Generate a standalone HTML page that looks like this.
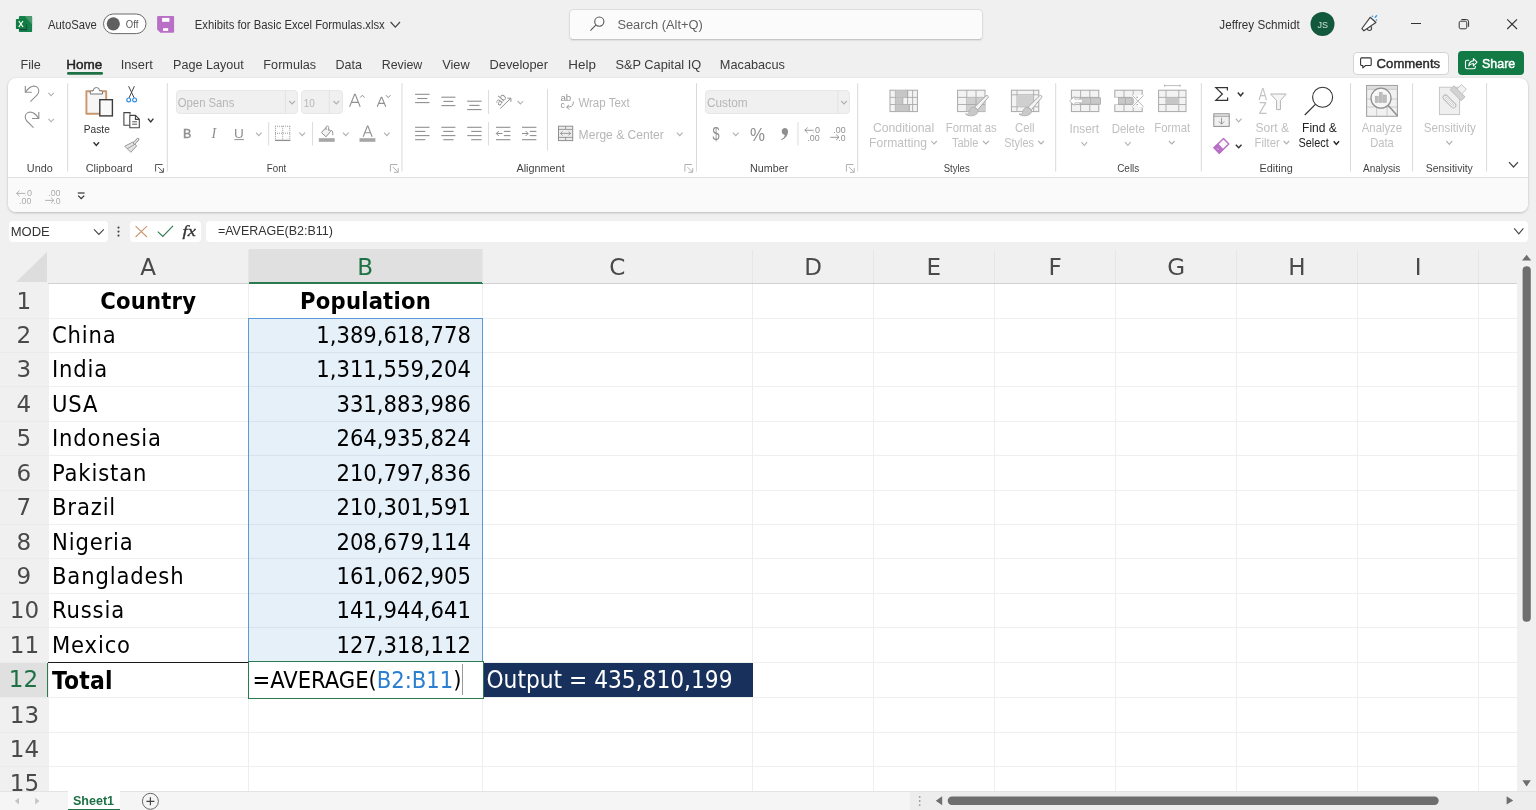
<!DOCTYPE html>
<html lang="en"><head><meta charset="utf-8"><title>Exhibits for Basic Excel Formulas.xlsx - Excel</title>
<style>
*{box-sizing:border-box;margin:0;padding:0}
html,body{width:1536px;height:810px;overflow:hidden;background:#f0f0f0;font-family:"Liberation Sans",sans-serif;color:#242424}
body{position:relative}
.a{position:absolute}
#ov{position:absolute;left:0;top:0;pointer-events:none;will-change:transform}
#ov text{white-space:pre}
#chrome{position:absolute;left:0;top:0;width:1536px;height:810px}
#grid{will-change:transform;position:absolute;left:0;top:0;width:1536px;height:791px;overflow:hidden;font-family:"DejaVu Sans Condensed","DejaVu Sans",sans-serif}
#grid>div{position:absolute}
.sheet{left:48.6px;top:284px;width:1469px;height:507px;background:#fff}
.ch{top:249px;height:35px;line-height:36px;text-align:center;font-size:23.5px;color:#4a4a4a;border-bottom:1px solid #d2d2d2}
.ch span,.rh span{display:inline-block;transform:scaleX(1.09)}
.ch.sel{background:#e0e0e0;color:#1e7145;border-bottom:2px solid #2b7a4f}
.chsep{top:250px;width:1px;height:33px;background:#e6e6e6}
.rh{left:0;width:48px;text-align:center;font-size:23.5px;color:#4a4a4a}
.rh.sel{background:#e0e0e0;color:#1e7145;border-right:1.6px solid #2b7a4f}
.hl{left:48px;width:1469px;height:1px;background:#efefef}
.rhl{left:0;width:48px;height:1px;background:#eaeaea}
.vl{top:284px;width:1px;height:507px;background:#eeeeee}
.range{background:#e6f0f9;border:1px solid #5a9ad8}
.hl2{height:1px;background:#d6e2ee}
.c{font-size:23.5px;color:#000;white-space:nowrap;overflow:visible}
.c.b{font-weight:bold;letter-spacing:.22px}
.c.ctr{text-align:center}
.c.l{text-align:left;padding-left:4px}
.c.ls{letter-spacing:.85px}
.c.r{text-align:right;padding-right:11.6px}
.c.wht{color:#fff}
.a12top{height:1.3px;background:#1a1a1a}
.outc{background:#17315c}
.active{border:1.5px solid #2b7a4f;background:#fff}
.ref{color:#2a7fd0}
.caret{display:inline-block;width:1px;height:31px;background:#9a9a9a;vertical-align:middle;margin-left:0.6px;margin-top:-3px}
.selall{left:15.6px;top:251.8px;width:0;height:0;border-style:solid;border-width:0 0 30.4px 31.4px;border-color:transparent transparent #dddddd transparent}
.c.tot{font-size:24.4px;letter-spacing:.25px}
.c.outt{font-size:24.2px}
</style></head><body>
<div id="grid">
<div class="sheet"></div>
<div class="selall"></div>
<div class="ch" style="left:48px;width:200.5px"><span>A</span></div>
<div class="ch sel" style="left:248.5px;width:234.0px"><span>B</span></div>
<div class="ch" style="left:482.5px;width:270.0px"><span>C</span></div>
<div class="ch" style="left:752.5px;width:121.0px"><span>D</span></div>
<div class="ch" style="left:873.5px;width:121.0px"><span>E</span></div>
<div class="ch" style="left:994.5px;width:121.0px"><span>F</span></div>
<div class="ch" style="left:1115.5px;width:121.0px"><span>G</span></div>
<div class="ch" style="left:1236.5px;width:121.0px"><span>H</span></div>
<div class="ch" style="left:1357.5px;width:121.0px"><span>I</span></div>
<div class="ch" style="left:1478.5px;width:38.5px"><span></span></div>
<div class="chsep" style="left:248.0px"></div>
<div class="chsep" style="left:482.0px"></div>
<div class="chsep" style="left:752.0px"></div>
<div class="chsep" style="left:873.0px"></div>
<div class="chsep" style="left:994.0px"></div>
<div class="chsep" style="left:1115.0px"></div>
<div class="chsep" style="left:1236.0px"></div>
<div class="chsep" style="left:1357.0px"></div>
<div class="chsep" style="left:1478.0px"></div>
<div class="rh" style="top:283.8px;height:34.2px;line-height:34.2px"><span>1</span></div>
<div class="rh" style="top:318.0px;height:34.4px;line-height:34.4px"><span>2</span></div>
<div class="rh" style="top:352.4px;height:34.4px;line-height:34.4px"><span>3</span></div>
<div class="rh" style="top:386.8px;height:34.4px;line-height:34.4px"><span>4</span></div>
<div class="rh" style="top:421.3px;height:34.4px;line-height:34.4px"><span>5</span></div>
<div class="rh" style="top:455.7px;height:34.4px;line-height:34.4px"><span>6</span></div>
<div class="rh" style="top:490.1px;height:34.4px;line-height:34.4px"><span>7</span></div>
<div class="rh" style="top:524.5px;height:34.4px;line-height:34.4px"><span>8</span></div>
<div class="rh" style="top:558.9px;height:34.4px;line-height:34.4px"><span>9</span></div>
<div class="rh" style="top:593.4px;height:34.4px;line-height:34.4px"><span>10</span></div>
<div class="rh" style="top:627.8px;height:34.4px;line-height:34.4px"><span>11</span></div>
<div class="rh sel" style="top:662.2px;height:35.6px;line-height:35.6px"><span>12</span></div>
<div class="rh" style="top:697.8px;height:34.5px;line-height:34.5px"><span>13</span></div>
<div class="rh" style="top:732.3px;height:34.1px;line-height:34.1px"><span>14</span></div>
<div class="rh" style="top:766.4px;height:34.2px;line-height:34.2px"><span>15</span></div>
<div class="hl" style="top:317.5px"></div>
<div class="rhl" style="top:317.5px"></div>
<div class="hl" style="top:351.9px"></div>
<div class="rhl" style="top:351.9px"></div>
<div class="hl" style="top:386.3px"></div>
<div class="rhl" style="top:386.3px"></div>
<div class="hl" style="top:420.8px"></div>
<div class="rhl" style="top:420.8px"></div>
<div class="hl" style="top:455.2px"></div>
<div class="rhl" style="top:455.2px"></div>
<div class="hl" style="top:489.6px"></div>
<div class="rhl" style="top:489.6px"></div>
<div class="hl" style="top:524.0px"></div>
<div class="rhl" style="top:524.0px"></div>
<div class="hl" style="top:558.4px"></div>
<div class="rhl" style="top:558.4px"></div>
<div class="hl" style="top:592.9px"></div>
<div class="rhl" style="top:592.9px"></div>
<div class="hl" style="top:627.3px"></div>
<div class="rhl" style="top:627.3px"></div>
<div class="hl" style="top:661.7px"></div>
<div class="rhl" style="top:661.7px"></div>
<div class="hl" style="top:697.3px"></div>
<div class="rhl" style="top:697.3px"></div>
<div class="hl" style="top:731.8px"></div>
<div class="rhl" style="top:731.8px"></div>
<div class="hl" style="top:765.9px"></div>
<div class="rhl" style="top:765.9px"></div>
<div class="vl" style="left:248.0px"></div>
<div class="vl" style="left:482.0px"></div>
<div class="vl" style="left:752.0px"></div>
<div class="vl" style="left:873.0px"></div>
<div class="vl" style="left:994.0px"></div>
<div class="vl" style="left:1115.0px"></div>
<div class="vl" style="left:1236.0px"></div>
<div class="vl" style="left:1357.0px"></div>
<div class="vl" style="left:1478.0px"></div>
<div class="range" style="left:248.0px;top:317.5px;width:235.0px;height:345.2px"></div>
<div class="hl2" style="top:351.9px;left:249.0px;width:233.0px"></div>
<div class="hl2" style="top:386.3px;left:249.0px;width:233.0px"></div>
<div class="hl2" style="top:420.8px;left:249.0px;width:233.0px"></div>
<div class="hl2" style="top:455.2px;left:249.0px;width:233.0px"></div>
<div class="hl2" style="top:489.6px;left:249.0px;width:233.0px"></div>
<div class="hl2" style="top:524.0px;left:249.0px;width:233.0px"></div>
<div class="hl2" style="top:558.4px;left:249.0px;width:233.0px"></div>
<div class="hl2" style="top:592.9px;left:249.0px;width:233.0px"></div>
<div class="hl2" style="top:627.3px;left:249.0px;width:233.0px"></div>
<div class="c b ctr" style="left:48px;top:283.8px;width:200.5px;height:34.2px;line-height:34.2px">Country</div>
<div class="c b ctr" style="left:248.5px;top:283.8px;width:234.0px;height:34.2px;line-height:34.2px">Population</div>
<div class="c l ls" style="left:48px;top:318.0px;width:200.5px;height:34.4px;line-height:34.4px">China</div>
<div class="c r" style="left:248.5px;top:318.0px;width:234.0px;height:34.4px;line-height:34.4px">1,389,618,778</div>
<div class="c l ls" style="left:48px;top:352.4px;width:200.5px;height:34.4px;line-height:34.4px">India</div>
<div class="c r" style="left:248.5px;top:352.4px;width:234.0px;height:34.4px;line-height:34.4px">1,311,559,204</div>
<div class="c l ls" style="left:48px;top:386.8px;width:200.5px;height:34.4px;line-height:34.4px">USA</div>
<div class="c r" style="left:248.5px;top:386.8px;width:234.0px;height:34.4px;line-height:34.4px">331,883,986</div>
<div class="c l ls" style="left:48px;top:421.3px;width:200.5px;height:34.4px;line-height:34.4px">Indonesia</div>
<div class="c r" style="left:248.5px;top:421.3px;width:234.0px;height:34.4px;line-height:34.4px">264,935,824</div>
<div class="c l ls" style="left:48px;top:455.7px;width:200.5px;height:34.4px;line-height:34.4px">Pakistan</div>
<div class="c r" style="left:248.5px;top:455.7px;width:234.0px;height:34.4px;line-height:34.4px">210,797,836</div>
<div class="c l ls" style="left:48px;top:490.1px;width:200.5px;height:34.4px;line-height:34.4px">Brazil</div>
<div class="c r" style="left:248.5px;top:490.1px;width:234.0px;height:34.4px;line-height:34.4px">210,301,591</div>
<div class="c l ls" style="left:48px;top:524.5px;width:200.5px;height:34.4px;line-height:34.4px">Nigeria</div>
<div class="c r" style="left:248.5px;top:524.5px;width:234.0px;height:34.4px;line-height:34.4px">208,679,114</div>
<div class="c l ls" style="left:48px;top:558.9px;width:200.5px;height:34.4px;line-height:34.4px">Bangladesh</div>
<div class="c r" style="left:248.5px;top:558.9px;width:234.0px;height:34.4px;line-height:34.4px">161,062,905</div>
<div class="c l ls" style="left:48px;top:593.4px;width:200.5px;height:34.4px;line-height:34.4px">Russia</div>
<div class="c r" style="left:248.5px;top:593.4px;width:234.0px;height:34.4px;line-height:34.4px">141,944,641</div>
<div class="c l ls" style="left:48px;top:627.8px;width:200.5px;height:34.4px;line-height:34.4px">Mexico</div>
<div class="c r" style="left:248.5px;top:627.8px;width:234.0px;height:34.4px;line-height:34.4px">127,318,112</div>
<div class="a12top" style="left:48px;top:661.6px;width:200.5px"></div>
<div class="c b l tot" style="left:48px;top:663.4px;width:200.5px;height:35.6px;line-height:35.6px">Total</div>
<div class="outc" style="left:483.0px;top:662.7px;width:269.5px;height:34.6px"></div>
<div class="c l wht outt" style="left:482.5px;top:663.1px;width:270.0px;height:35.6px;line-height:35.6px">Output = 435,810,199</div>
<div class="active" style="left:247.5px;top:661.4px;width:236.0px;height:37.2px"></div>
<div class="c l edit" style="left:248.5px;top:662.7px;width:234.0px;height:35.6px;line-height:35.6px">=AVERAGE(<span class="ref">B2:B11</span>)<span class="caret"></span></div>
</div>
<div id="chrome">
<div class="a" style="left:569px;top:8.5px;width:414.4px;height:31.2px;background:#fbfbfb;border:1px solid #dddddd;border-radius:4.5px;border-bottom-color:#c6c6c6;box-shadow:0 1px 1.5px rgba(0,0,0,.08);"></div>
<div class="a" style="left:1352.7px;top:51.5px;width:96.5px;height:23px;background:#fff;border:1px solid #d4d4d4;border-radius:4px;"></div>
<div class="a" style="left:1457.7px;top:50.8px;width:66.3px;height:24.2px;background:#117a45;border-radius:4px;"></div>
<div class="a" style="left:8px;top:77.6px;width:1520px;height:134.9px;background:#fff;border-radius:8px;box-shadow:0 1px 2.5px rgba(0,0,0,.22),0 0 1px rgba(0,0,0,.12);overflow:hidden"><div class="a" style="left:0;top:99.4px;width:1520px;height:36px;background:#fafafa;border-top:1px solid #dfdfdf"></div></div>
<div class="a" style="left:175.5px;top:90.1px;width:122.8px;height:24px;background:#f0f0f0;border:1px solid #e7e7e7;border-radius:4px;"></div>
<div class="a" style="left:300.5px;top:90.1px;width:42px;height:24px;background:#f0f0f0;border:1px solid #e7e7e7;border-radius:4px;"></div>
<div class="a" style="left:704.8px;top:90.1px;width:145.2px;height:24px;background:#f0f0f0;border:1px solid #e7e7e7;border-radius:4px;"></div>
<div class="a" style="left:8.9px;top:221.4px;width:99.2px;height:20.3px;background:#fff;border-radius:4px;"></div>
<div class="a" style="left:129.6px;top:221.4px;width:71.3px;height:20.3px;background:#fff;border-radius:4px;"></div>
<div class="a" style="left:206.2px;top:221.4px;width:1321.8px;height:20.3px;background:#fff;border-radius:4px;"></div>
<div class="a" style="left:1517px;top:249px;width:19px;height:542px;background:#f0f0f0;"></div>
<div class="a" style="left:0px;top:790.5px;width:1536px;height:19.5px;background:#f5f5f5;border:0;border-top:1px solid #e3e3e3;"></div>
<div class="a" style="left:910px;top:791.5px;width:626px;height:18.5px;background:#ededed;"></div>
<div class="a" style="left:67.7px;top:790.5px;width:52.1px;height:19.5px;background:#fff;border:0;border-bottom:1.6px solid #1e7145;"></div>
</div>
<svg id="ov" width="1536" height="810" viewBox="0 0 1536 810" font-family='"Liberation Sans",sans-serif'>
<rect x="18.9" y="15.9" width="13.2" height="16.2" rx="1.2" fill="#15804a"/>
<path d="M24.6,15.9 H30.9 a1.2,1.2 0 0 1 1.2,1.2 V24.6 Z" fill="#4a9a6e"/>
<path d="M19.4,29.6 H26.6 V24.2" fill="none" stroke="#15303a" stroke-width="0.9"/>
<rect x="15.9" y="18.9" width="10.5" height="10.2" rx="0.9" fill="#107c41"/>
<path d="M18.8,21 L23,27 M23,21 L18.8,27" stroke="#fff" stroke-width="1.25"/>
<text transform="translate(48.00,28.60) scale(0.940,1)" font-size="12" fill="#333">AutoSave</text>
<rect x="103.5" y="14" width="42.5" height="19.6" rx="9.8" fill="#fff" stroke="#6a6a6a" stroke-width="1"/>
<circle cx="113.3" cy="23.8" r="6.6" fill="#606060"/>
<text transform="translate(125.80,28.20) scale(0.829,1)" font-size="11.5" fill="#555">Off</text>
<path d="M158.1,15.9 H173.1 a1,1 0 0 1 1,1 V31.7 a1,1 0 0 1 -1,1 H160.4 L157.1,29.6 V16.9 a1,1 0 0 1 1,-1z" fill="#b96fc6"/>
<rect x="162.1" y="17.9" width="7.3" height="3.9" fill="#fff"/><rect x="163" y="28.2" width="5.2" height="2.7" fill="#fff"/>
<text transform="translate(194.80,28.60) scale(0.941,1)" font-size="12" fill="#333">Exhibits for Basic Excel Formulas.xlsx</text>
<path d="M390.6,22.0 L395.3,27.2 L400.0,22.0" stroke="#444" stroke-width="1.2" fill="none"/>
<circle cx="599.3" cy="21.6" r="4.6" fill="none" stroke="#555" stroke-width="1.1"/><path d="M596,24.9 L590.4,30.6" stroke="#555" stroke-width="1.1"/>
<text transform="translate(617.40,28.70) scale(0.953,1)" font-size="13.5" fill="#616161">Search (Alt+Q)</text>
<text transform="translate(1219.30,28.90) scale(0.936,1)" font-size="12.5" fill="#333">Jeffrey Schmidt</text>
<circle cx="1322.5" cy="24" r="12" fill="#12583c"/>
<text transform="translate(1317.40,27.60) scale(0.949,1)" font-size="9.5" fill="#cfe0d6">JS</text>
<circle cx="1369.4" cy="28.3" r="2.2" fill="none" stroke="#444" stroke-width="1.1"/>
<path d="M1361.9,28.5 L1370.2,17.3 L1375.9,22.5 L1363.9,30.8 Z" fill="#fafafa" stroke="#444" stroke-width="1.2" stroke-linejoin="round"/>
<circle cx="1372.5" cy="16.3" r="0.8" fill="#3a96dd"/><path d="M1375.2,17.2 L1376.6,15.8" stroke="#3a96dd" stroke-width="1.3" stroke-linecap="round"/><circle cx="1376.4" cy="20.1" r="0.8" fill="#3a96dd"/>
<path d="M1411,23.5 H1421" stroke="#333" stroke-width="1"/>
<rect x="1459.2" y="21.2" width="7.6" height="7.6" rx="1.6" fill="none" stroke="#333" stroke-width="1"/>
<path d="M1461.4,19.5 H1466.3 a2.3,2.3 0 0 1 2.3,2.3 V26.8" fill="none" stroke="#333" stroke-width="1"/>
<path d="M1507.2,19.3 L1517,29 M1517,19.3 L1507.2,29" stroke="#333" stroke-width="1.1"/>
<text transform="translate(20.46,68.70) scale(0.939,1)" font-size="13.5" fill="#3b3b3b">File</text>
<text transform="translate(120.65,68.70) scale(0.951,1)" font-size="13.5" fill="#3b3b3b">Insert</text>
<text transform="translate(173.07,68.70) scale(0.933,1)" font-size="13.5" fill="#3b3b3b">Page Layout</text>
<text transform="translate(263.36,68.70) scale(0.939,1)" font-size="13.5" fill="#3b3b3b">Formulas</text>
<text transform="translate(335.57,68.70) scale(0.928,1)" font-size="13.5" fill="#3b3b3b">Data</text>
<text transform="translate(381.68,68.70) scale(0.919,1)" font-size="13.5" fill="#3b3b3b">Review</text>
<text transform="translate(442.20,68.70) scale(0.950,1)" font-size="13.5" fill="#3b3b3b">View</text>
<text transform="translate(489.45,68.70) scale(0.953,1)" font-size="13.5" fill="#3b3b3b">Developer</text>
<text transform="translate(568.31,68.70) scale(0.994,1)" font-size="13.5" fill="#3b3b3b">Help</text>
<text transform="translate(615.50,68.70) scale(0.947,1)" font-size="13.5" fill="#3b3b3b">S&amp;P Capital IQ</text>
<text transform="translate(719.86,68.70) scale(0.943,1)" font-size="13.5" fill="#3b3b3b">Macabacus</text>
<text transform="translate(66.20,68.70) scale(1.003,1)" font-size="13.5" fill="#222" stroke="#222" stroke-width="0.45">Home</text>
<rect x="67" y="72" width="36" height="2.8" rx="1.4" fill="#1e7145"/>
<path d="M1361.6,57.9 h8.6 a1,1 0 0 1 1,1 v5.6 a1,1 0 0 1 -1,1 h-4.6 l-2.8,2.4 v-2.4 h-1.2 a1,1 0 0 1 -1,-1 v-5.6 a1,1 0 0 1 1,-1z" fill="none" stroke="#333" stroke-width="1.1" stroke-linejoin="round"/>
<text transform="translate(1376.60,67.70) scale(0.974,1)" font-size="13.5" fill="#2b2b2b" stroke="#2b2b2b" stroke-width="0.45">Comments</text>
<path d="M1469.2,60.3 h-2.2 a1.5,1.5 0 0 0 -1.5,1.5 v5.4 a1.5,1.5 0 0 0 1.5,1.5 h6.8 a1.5,1.5 0 0 0 1.5,-1.5 v-1.2" fill="none" stroke="#fff" stroke-width="1.1"/>
<path d="M1468.8,65.8 c0.3,-3.2 2,-4.8 4.6,-4.9 v-2.3 l3.6,3.6 -3.6,3.6 v-2.3 c-2,0 -3.4,0.6 -4.6,2.3z" fill="none" stroke="#fff" stroke-width="1.1" stroke-linejoin="round"/>
<text transform="translate(1482.00,67.70) scale(0.924,1)" font-size="13.5" fill="#fff" stroke="#fff" stroke-width="0.45">Share</text>
<path d="M67.7,83.2 V171.5" stroke="#d9d9d9" stroke-width="1"/>
<path d="M167.3,83.2 V171.5" stroke="#d9d9d9" stroke-width="1"/>
<path d="M402,83.2 V171.5" stroke="#d9d9d9" stroke-width="1"/>
<path d="M696.5,83.2 V171.5" stroke="#d9d9d9" stroke-width="1"/>
<path d="M857.7,83.2 V171.5" stroke="#d9d9d9" stroke-width="1"/>
<path d="M1055.7,83.2 V171.5" stroke="#d9d9d9" stroke-width="1"/>
<path d="M1201.3,83.2 V171.5" stroke="#d9d9d9" stroke-width="1"/>
<path d="M1350.5,83.2 V171.5" stroke="#d9d9d9" stroke-width="1"/>
<path d="M1412.6,83.2 V171.5" stroke="#d9d9d9" stroke-width="1"/>
<path d="M1486.6,83.2 V171.5" stroke="#d9d9d9" stroke-width="1"/>
<path d="M25.3,86 V92.2 H31.8 M25.6,91.9 C28,88.4 30.6,86.1 34,86.1 C37,86.1 38.8,88.4 38.8,90.9 C38.8,92.6 38,94 37.2,94.8 L30.4,101.6" fill="none" stroke="#8f8f8f" stroke-width="1.1"/>
<path d="M48.4,92.8 L51.1,95.8 L53.9,92.8" stroke="#b0b0b0" stroke-width="1.1" fill="none"/>
<path d="M38.8,112 V118.5 H32 M38.5,118.2 C36.2,114.6 33.6,112.1 30.2,112.1 C27.2,112.1 25.2,114.4 25.2,117 C25.2,118.8 26,120.2 26.8,121 L33.5,127.7" fill="none" stroke="#8f8f8f" stroke-width="1.1"/>
<path d="M48.4,118.8 L51.1,121.8 L53.9,118.8" stroke="#b0b0b0" stroke-width="1.1" fill="none"/>
<text transform="translate(26.80,171.50) scale(0.945,1)" font-size="11.5" fill="#444">Undo</text>
<path d="M86.4,91.2 H106.2 V113.8 H86.4 Z" fill="#f6f6f6" stroke="#c9976f" stroke-width="1.9" stroke-linejoin="round"/>
<path d="M90.3,94 V91.9 a1,1 0 0 1 1,-1 H93.2 a3.2,3.4 0 0 1 6.4,0 H101.5 a1,1 0 0 1 1,1 V94 Z" fill="#fff" stroke="#777" stroke-width="1"/>
<rect x="99.8" y="99.7" width="12.6" height="16.2" fill="#f9f9f9" stroke="#3c3c3c" stroke-width="1.4"/>
<text transform="translate(83.80,132.60) scale(0.863,1)" font-size="11.8" fill="#333">Paste</text>
<path d="M93.6,142.2 L96.3,145.5 L99.0,142.2" stroke="#333" stroke-width="1.4" fill="none"/>
<path d="M128.6,86.2 L134.2,97.9 M134.4,86.2 L129,97.9" fill="none" stroke="#444" stroke-width="1"/>
<circle cx="128.7" cy="99.9" r="1.9" fill="#fff" stroke="#2f8fe0" stroke-width="1.2"/><circle cx="134.6" cy="99.9" r="1.9" fill="#fff" stroke="#2f8fe0" stroke-width="1.2"/>
<path d="M130,114.4 V112.6 H123.9 V125.2 H129.6" fill="none" stroke="#444" stroke-width="1.1"/>
<path d="M129.8,115.4 H135.6 L139.3,119.2 V127.8 H129.8 Z M135.4,115.6 V119.4 H139.2" fill="#fff" stroke="#444" stroke-width="1.1" stroke-linejoin="round"/>
<path d="M132.2,121.8 H137 M132.2,124.2 H137" stroke="#444" stroke-width="0.9"/>
<path d="M148.0,118.6 L150.7,121.9 L153.4,118.6" stroke="#333" stroke-width="1.4" fill="none"/>
<path d="M124.8,146.2 L133.2,141.9 L136.6,146 L130.8,152.3 Z" fill="#e4e4e4" stroke="#8f8f8f" stroke-width="0.9" stroke-linejoin="round"/>
<path d="M127.2,148.8 L135,144.2" stroke="#8f8f8f" stroke-width="0.8"/>
<path d="M134.4,143 L138,139.2" stroke="#8f8f8f" stroke-width="2.8" stroke-linecap="round"/><path d="M134.4,143 L138,139.2" stroke="#efefef" stroke-width="1.2" stroke-linecap="round"/>
<text transform="translate(85.70,171.50) scale(0.952,1)" font-size="11.5" fill="#444">Clipboard</text>
<path d="M155.6,171.5 V164.5 H162.6" fill="none" stroke="#555" stroke-width="1"/><path d="M158.2,167.1 L163.2,172.1 M163.4,168.1 V172.3 H159.2" fill="none" stroke="#555" stroke-width="1"/>
<path d="M285.4,91 V113.2" stroke="#e2e2e2" stroke-width="1"/>
<text transform="translate(177.80,106.80) scale(0.904,1)" font-size="12.5" fill="#b6b6b6">Open Sans</text>
<path d="M289.3,101.0 L292.1,104.0 L295.0,101.0" stroke="#b0b0b0" stroke-width="1.1" fill="none"/>
<path d="M329.3,91 V113.2" stroke="#e2e2e2" stroke-width="1"/>
<text transform="translate(303.70,106.80) scale(0.892,1)" font-size="11.2" fill="#b6b6b6">10</text>
<path d="M333.5,101.0 L336.3,104.0 L339.1,101.0" stroke="#b0b0b0" stroke-width="1.1" fill="none"/>
<path d="M349.6,106.8 L354.6,94.4 H355.2 L360.2,106.8 M351.4,102.4 H358.4" fill="none" stroke="#8f8f8f" stroke-width="1.1"/>
<path d="M360.2,97.6 L362.4,95.2 L364.6,97.6" stroke="#8f8f8f" stroke-width="1" fill="none"/>
<path d="M377.2,106.8 L381.2,97.3 H381.8 L385.8,106.8 M378.7,103.4 H384.3" fill="none" stroke="#8f8f8f" stroke-width="1.1"/>
<path d="M386.0,95.2 L388.2,97.6 L390.4,95.2" stroke="#8f8f8f" stroke-width="1" fill="none"/>
<text transform="translate(183.05,137.50) scale(0.950,1)" font-size="13.2" fill="#8f8f8f" stroke="#8f8f8f" stroke-width="0.45">B</text>
<text transform="translate(211.43,137.50) scale(0.929,1)" font-size="15.2" fill="#8f8f8f" font-style="italic" font-family='"Liberation Serif",sans-serif'>I</text>
<text transform="translate(233.99,137.50) scale(1.012,1)" font-size="13.4" fill="#8f8f8f">U</text>
<path d="M234.4,139.6 H243.8" stroke="#8f8f8f" stroke-width="1"/>
<path d="M256.0,132.6 L258.8,135.7 L261.5,132.6" stroke="#b0b0b0" stroke-width="1.1" fill="none"/>
<path d="M268.7,122 V145.6" stroke="#dcdcdc" stroke-width="1"/>
<path d="M275,126.2 H290.4 M275,133.2 H290.4 M275.5,126.2 V139.6 M282.7,126.2 V139.6 M289.8,126.2 V139.6" fill="none" stroke="#9a9a9a" stroke-width="1" stroke-dasharray="1 1"/>
<path d="M275,140.4 H290.4" stroke="#8f8f8f" stroke-width="1.3"/>
<path d="M299.4,132.6 L302.2,135.7 L305.0,132.6" stroke="#b0b0b0" stroke-width="1.1" fill="none"/>
<path d="M312.5,122 V145.6" stroke="#dcdcdc" stroke-width="1"/>
<path d="M326.2,127.4 L321.4,132.6 L326,136.8 L330.7,131.2 L328.6,129.2" fill="#f2f2f2" stroke="#8f8f8f" stroke-width="1" stroke-linejoin="round"/>
<path d="M326,130 V127.4 a1.35,1.35 0 0 1 2.7,0 V130.8" fill="none" stroke="#8f8f8f" stroke-width="0.9"/>
<path d="M330.4,130.8 C332,129.6 333,131.6 332.8,135.2" fill="none" stroke="#8f8f8f" stroke-width="1"/>
<rect x="318.8" y="138.2" width="15.9" height="3.6" fill="#a6a6a6"/>
<path d="M343.0,132.6 L345.8,135.7 L348.6,132.6" stroke="#b0b0b0" stroke-width="1.1" fill="none"/>
<path d="M363.2,136.8 L367.4,126 H367.9 L372.1,136.8 M364.8,132.8 H370.5" fill="none" stroke="#8f8f8f" stroke-width="1.1"/>
<rect x="359.5" y="138.2" width="15.9" height="3.6" fill="#a6a6a6"/>
<path d="M384.1,132.6 L386.9,135.7 L389.6,132.6" stroke="#b0b0b0" stroke-width="1.1" fill="none"/>
<text transform="translate(266.80,171.50) scale(0.848,1)" font-size="11.5" fill="#444">Font</text>
<path d="M390.4,171.5 V164.5 H397.4" fill="none" stroke="#b0b0b0" stroke-width="1"/><path d="M393.0,167.1 L398.0,172.1 M398.2,168.1 V172.3 H394.0" fill="none" stroke="#b0b0b0" stroke-width="1"/>
<path d="M415.1,94.3 H429.5" stroke="#8f8f8f" stroke-width="1.1"/>
<path d="M417.20000000000005,98.5 H427.4" stroke="#8f8f8f" stroke-width="1.1"/>
<path d="M415.1,102.6 H429.5" stroke="#8f8f8f" stroke-width="1.1"/>
<path d="M441.3,97.2 H455.4" stroke="#8f8f8f" stroke-width="1.1"/>
<path d="M443.40000000000003,101.4 H453.29999999999995" stroke="#8f8f8f" stroke-width="1.1"/>
<path d="M441.3,105.6 H455.4" stroke="#8f8f8f" stroke-width="1.1"/>
<path d="M467.2,101.2 H481.6" stroke="#8f8f8f" stroke-width="1.1"/>
<path d="M469.3,105.4 H479.5" stroke="#8f8f8f" stroke-width="1.1"/>
<path d="M467.2,109.6 H481.6" stroke="#8f8f8f" stroke-width="1.1"/>
<path d="M488.5,90.1 V114" stroke="#dcdcdc" stroke-width="1"/>
<text transform="translate(500.7,99.6) rotate(-50)" x="0" y="3.4" text-anchor="middle" font-size="10.5" fill="#8f8f8f">ab</text>
<path d="M500.2,108.6 L510.8,98.3 M507.3,98.2 H510.9 V101.8" fill="none" stroke="#8f8f8f" stroke-width="1"/>
<path d="M517.6,101.0 L520.4,104.0 L523.1,101.0" stroke="#b0b0b0" stroke-width="1.1" fill="none"/>
<path d="M415.1,127.3 H429.5" stroke="#8f8f8f" stroke-width="1.1"/>
<path d="M415.1,131.4 H425.3" stroke="#8f8f8f" stroke-width="1.1"/>
<path d="M415.1,135.6 H429.5" stroke="#8f8f8f" stroke-width="1.1"/>
<path d="M415.1,139.7 H425.3" stroke="#8f8f8f" stroke-width="1.1"/>
<path d="M441.3,127.3 H455.4" stroke="#8f8f8f" stroke-width="1.1"/>
<path d="M443.2,131.4 H453.6" stroke="#8f8f8f" stroke-width="1.1"/>
<path d="M441.3,135.6 H455.4" stroke="#8f8f8f" stroke-width="1.1"/>
<path d="M443.2,139.7 H453.6" stroke="#8f8f8f" stroke-width="1.1"/>
<path d="M467.2,127.3 H481.6" stroke="#8f8f8f" stroke-width="1.1"/>
<path d="M471.2,131.4 H481.6" stroke="#8f8f8f" stroke-width="1.1"/>
<path d="M467.2,135.6 H481.6" stroke="#8f8f8f" stroke-width="1.1"/>
<path d="M471.2,139.7 H481.6" stroke="#8f8f8f" stroke-width="1.1"/>
<path d="M488.5,122 V145.6" stroke="#dcdcdc" stroke-width="1"/>
<path d="M496,127.3 H510.4" stroke="#8f8f8f" stroke-width="1.1"/>
<path d="M503.8,131.4 H510.4" stroke="#8f8f8f" stroke-width="1.1"/>
<path d="M503.8,135.6 H510.4" stroke="#8f8f8f" stroke-width="1.1"/>
<path d="M496,139.7 H510.4" stroke="#8f8f8f" stroke-width="1.1"/>
<path d="M496.4,133.5 H502.4 M498.8,131 L496.3,133.5 L498.8,136" fill="none" stroke="#8f8f8f" stroke-width="1"/>
<path d="M522,127.3 H536.4" stroke="#8f8f8f" stroke-width="1.1"/>
<path d="M529.8,131.4 H536.4" stroke="#8f8f8f" stroke-width="1.1"/>
<path d="M529.8,135.6 H536.4" stroke="#8f8f8f" stroke-width="1.1"/>
<path d="M522,139.7 H536.4" stroke="#8f8f8f" stroke-width="1.1"/>
<path d="M522,133.5 H528 M525.6,131 L528.1,133.5 L525.6,136" fill="none" stroke="#8f8f8f" stroke-width="1"/>
<path d="M547.5,89 V150.6" stroke="#dcdcdc" stroke-width="1"/>
<text transform="translate(560.40,101.20) scale(1.004,1)" font-size="9.8" fill="#8f8f8f">ab</text>
<text transform="translate(560.40,108.20) scale(0.880,1)" font-size="9.8" fill="#8f8f8f">c</text>
<path d="M573.3,101.6 C573.6,104.6 572.2,106.6 569.6,106.9 H566.8 M569,104.8 L566.6,107 L569.2,109.6" fill="none" stroke="#8f8f8f" stroke-width="0.9"/>
<text transform="translate(578.40,106.70) scale(0.958,1)" font-size="12" fill="#b6b6b6">Wrap Text</text>
<rect x="558.5" y="126.2" width="14.2" height="14.4" fill="#ededed" stroke="#8f8f8f" stroke-width="1"/>
<path d="M558.5,129.4 H572.7 M558.5,137.4 H572.7 M565.6,126.2 V129.4 M565.6,137.4 V140.6" stroke="#8f8f8f" stroke-width="0.9"/>
<path d="M560.6,133.4 H570.6 M562.6,131.4 L560.5,133.4 L562.6,135.4 M568.6,131.4 L570.7,133.4 L568.6,135.4" fill="none" stroke="#8f8f8f" stroke-width="0.9"/>
<text transform="translate(578.60,138.80) scale(1.008,1)" font-size="12" fill="#b6b6b6">Merge &amp; Center</text>
<path d="M676.9,132.6 L679.8,135.7 L682.6,132.6" stroke="#b0b0b0" stroke-width="1.1" fill="none"/>
<text transform="translate(516.50,171.50) scale(0.943,1)" font-size="11.5" fill="#444">Alignment</text>
<path d="M684.9,171.5 V164.5 H691.9" fill="none" stroke="#b0b0b0" stroke-width="1"/><path d="M687.5,167.1 L692.5,172.1 M692.6999999999999,168.1 V172.3 H688.5" fill="none" stroke="#b0b0b0" stroke-width="1"/>
<path d="M837.9,91 V113.2" stroke="#e2e2e2" stroke-width="1"/>
<text transform="translate(707.00,106.80) scale(0.945,1)" font-size="12.5" fill="#b6b6b6">Custom</text>
<path d="M841.2,101.0 L844.0,104.0 L846.8,101.0" stroke="#b0b0b0" stroke-width="1.1" fill="none"/>
<text transform="translate(712.50,139.90) scale(0.730,1)" font-size="17.5" fill="#8f8f8f">$</text>
<path d="M732.9,132.6 L735.8,135.7 L738.7,132.6" stroke="#b0b0b0" stroke-width="1.1" fill="none"/>
<text transform="translate(750.00,140.90) scale(0.888,1)" font-size="19" fill="#8f8f8f">%</text>
<path d="M784.5,128 a3.5,3.5 0 0 1 3.5,3.6 c0,4 -2.6,7 -6.6,8.6 l-0.4,-0.9 c2.4,-1.2 3.6,-2.6 3.8,-4.4 a3.5,3.5 0 0 1 -0.3,-6.9z" fill="#8f8f8f"/>
<path d="M798,122 V145.6" stroke="#dcdcdc" stroke-width="1"/>
<path d="M804.8,130.3 H813.5 M807.7,127.5 L804.8,130.3 L807.7,133.1" fill="none" stroke="#8f8f8f" stroke-width="0.9"/>
<text transform="translate(815.10,132.70) scale(0.940,1)" font-size="9.6" fill="#8f8f8f">0</text>
<circle cx="813.7" cy="132.3" r="0.45" fill="#8f8f8f"/>
<text transform="translate(807.30,140.90) scale(0.923,1)" font-size="9.6" fill="#8f8f8f">.00</text>
<text transform="translate(833.30,132.70) scale(0.923,1)" font-size="9.6" fill="#8f8f8f">.00</text>
<path d="M830.2,137.3 H839.0 M836.1,134.5 L839.0,137.3 L836.1,140.1" fill="none" stroke="#8f8f8f" stroke-width="0.9"/>
<text transform="translate(838.40,140.90) scale(0.900,1)" font-size="9.6" fill="#8f8f8f">.0</text>
<text transform="translate(750.00,171.50) scale(0.935,1)" font-size="11.5" fill="#444">Number</text>
<path d="M846.4,171.5 V164.5 H853.4" fill="none" stroke="#b0b0b0" stroke-width="1"/><path d="M849.0,167.1 L854.0,172.1 M854.1999999999999,168.1 V172.3 H850.0" fill="none" stroke="#b0b0b0" stroke-width="1"/>
<rect x="890" y="90.2" width="27.4" height="21.4" fill="#f3f3f3" stroke="#a9a9a9" stroke-width="1"/>
<path d="M895.4,90.2 V111.6 M907.6,90.2 V111.6 M912.6,90.2 V111.6 M890,97.4 H917.4 M890,104.5 H917.4 " stroke="#a9a9a9" stroke-width="0.9" fill="none"/>
<rect x="895.6" y="90.6" width="11.8" height="6.6" fill="#c6c6c6"/><rect x="895.6" y="97.8" width="7" height="6.4" fill="#c6c6c6"/><rect x="895.6" y="104.8" width="13.6" height="6.4" fill="#c6c6c6"/>
<path d="M902.8,97.4 V104.5 M909.4,104.5 V111.6 M907.6,90.2 V97.4" stroke="#a9a9a9" stroke-width="0.9"/>
<text transform="translate(872.90,131.60) scale(1.021,1)" font-size="12" fill="#c0c0c0">Conditional</text>
<text transform="translate(869.10,147.30) scale(1.009,1)" font-size="12" fill="#c0c0c0">Formatting</text>
<path d="M931.3,141.0 L934.0,144.0 L936.8,141.0" stroke="#b0b0b0" stroke-width="1.1" fill="none"/>
<rect x="957.6" y="90.2" width="27.4" height="21.4" fill="#f3f3f3" stroke="#a9a9a9" stroke-width="1"/>
<path d="M966.8000000000001,90.2 V111.6 M976.0,90.2 V111.6 M957.6,97.4 H985.0 M957.6,104.5 H985.0 " stroke="#a9a9a9" stroke-width="0.9" fill="none"/>
<rect x="967" y="97.6" width="17.8" height="13.8" fill="#cfcfcf"/>
<path d="M976,97.4 V111.6 M966.8,104.5 H985" stroke="#a9a9a9" stroke-width="0.9"/>
<path d="M986.0,95.80000000000001 C987.6,94.80000000000001 988.8,96.2 988.0,97.60000000000001 L977.8,109.80000000000001 L974.4,107.2 Z" fill="#f4f4f4" stroke="#a9a9a9" stroke-width="1" stroke-linejoin="round"/>
<path d="M974.6,107.4 C971.0,106.80000000000001 969.1999999999999,110.0 969.0,112.4 C968.6,114.0 966.8,114.60000000000001 965.4,113.80000000000001 C967.4,116.4 974.0,116.60000000000001 976.8,113.80000000000001 C978.1999999999999,112.2 978.1999999999999,110.80000000000001 977.6,109.80000000000001 Z" fill="#c9c9c9" stroke="#a9a9a9" stroke-width="0.8"/>
<text transform="translate(945.70,131.60) scale(0.946,1)" font-size="12" fill="#c0c0c0">Format as</text>
<text transform="translate(951.90,147.30) scale(0.924,1)" font-size="12" fill="#c0c0c0">Table</text>
<path d="M983.0,141.0 L985.9,144.0 L988.8,141.0" stroke="#b0b0b0" stroke-width="1.1" fill="none"/>
<rect x="1011.4" y="90.2" width="27.4" height="21.4" fill="#f3f3f3" stroke="#a9a9a9" stroke-width="1"/>
<path d="M1017.0,90.2 V111.6 M1033.6,90.2 V111.6 M1011.4,94.8 H1038.8 M1011.4,106.80000000000001 H1038.8 " stroke="#a9a9a9" stroke-width="0.9" fill="none"/>
<rect x="1017.4" y="95.2" width="15.8" height="11.2" fill="#cfcfcf"/>
<path d="M1039.6,95.80000000000001 C1041.2,94.80000000000001 1042.4,96.2 1041.6,97.60000000000001 L1031.4,109.80000000000001 L1028,107.2 Z" fill="#f4f4f4" stroke="#a9a9a9" stroke-width="1" stroke-linejoin="round"/>
<path d="M1028.2,107.4 C1024.6,106.80000000000001 1022.8,110.0 1022.6,112.4 C1022.2,114.0 1020.4,114.60000000000001 1019,113.80000000000001 C1021,116.4 1027.6,116.60000000000001 1030.4,113.80000000000001 C1031.8,112.2 1031.8,110.80000000000001 1031.2,109.80000000000001 Z" fill="#c9c9c9" stroke="#a9a9a9" stroke-width="0.8"/>
<text transform="translate(1015.00,131.60) scale(0.950,1)" font-size="12" fill="#c0c0c0">Cell</text>
<text transform="translate(1004.20,147.30) scale(0.912,1)" font-size="12" fill="#c0c0c0">Styles</text>
<path d="M1038.2,141.0 L1041.1,144.0 L1043.9,141.0" stroke="#b0b0b0" stroke-width="1.1" fill="none"/>
<text transform="translate(943.70,171.50) scale(0.830,1)" font-size="11.5" fill="#444">Styles</text>
<rect x="1071.4" y="90.2" width="27.4" height="21.4" fill="#f3f3f3" stroke="#a9a9a9" stroke-width="1"/>
<path d="M1080.6000000000001,90.2 V111.6 M1089.8000000000002,90.2 V111.6 M1071.4,97.4 H1098.8000000000002 M1071.4,104.5 H1098.8000000000002 " stroke="#a9a9a9" stroke-width="0.9" fill="none"/>
<rect x="1080" y="97.8" width="20.6" height="6.4" fill="#c9c9c9" stroke="#a9a9a9" stroke-width="0.8"/><path d="M1090.6,97.8 V104.2" stroke="#a9a9a9" stroke-width="0.8"/>
<path d="M1069.6,101 L1074.8,96.4 V99.2 H1082.6 V102.8 H1074.8 V105.6 Z" fill="#fff" stroke="#bdbdbd" stroke-width="0.9" stroke-linejoin="round"/>
<text transform="translate(1069.42,132.50) scale(0.984,1)" font-size="12" fill="#c0c0c0">Insert</text>
<path d="M1081.6,142.2 L1084.3,145.5 L1087.1,142.2" stroke="#b0b0b0" stroke-width="1.1" fill="none"/>
<rect x="1114.8" y="90.2" width="27.4" height="21.4" fill="#f3f3f3" stroke="#a9a9a9" stroke-width="1"/>
<path d="M1124.0,90.2 V111.6 M1133.2,90.2 V111.6 M1114.8,97.4 H1142.2 M1114.8,104.5 H1142.2 " stroke="#a9a9a9" stroke-width="0.9" fill="none"/>
<rect x="1113.4" y="97.6" width="4.8" height="6.8" fill="#fff"/><rect x="1138" y="95" width="6" height="12" fill="#fff"/>
<rect x="1118.6" y="97.8" width="13.6" height="6.4" fill="#c9c9c9" stroke="#a9a9a9" stroke-width="0.8"/><path d="M1125.4,97.8 V104.2" stroke="#a9a9a9" stroke-width="0.8"/>
<path d="M1132.4,95.4 L1143.6,106.8 M1143.6,95.4 L1132.4,106.8" stroke="#fff" stroke-width="2.6"/><path d="M1132.4,95.4 L1143.6,106.8 M1143.6,95.4 L1132.4,106.8" stroke="#b9b9b9" stroke-width="1"/>
<text transform="translate(1111.70,132.50) scale(0.954,1)" font-size="12" fill="#c0c0c0">Delete</text>
<path d="M1125.1,142.2 L1127.8,145.5 L1130.6,142.2" stroke="#b0b0b0" stroke-width="1.1" fill="none"/>
<rect x="1158.6" y="90.2" width="27.4" height="21.4" fill="#f3f3f3" stroke="#a9a9a9" stroke-width="1"/>
<path d="M1166.0,90.2 V111.6 M1178.8,90.2 V111.6 M1158.6,97.4 H1186.0 M1158.6,104.5 H1186.0 " stroke="#a9a9a9" stroke-width="0.9" fill="none"/>
<rect x="1166" y="97.8" width="12.8" height="6.4" fill="#c6c6c6"/>
<path d="M1164.6,85.6 H1180.2 M1164.6,84.4 V86.8 M1180.2,84.4 V86.8" stroke="#b4b4b4" stroke-width="0.9"/>
<text transform="translate(1154.30,131.60) scale(0.946,1)" font-size="12" fill="#c0c0c0">Format</text>
<path d="M1168.9,141.0 L1171.8,144.0 L1174.6,141.0" stroke="#b0b0b0" stroke-width="1.1" fill="none"/>
<text transform="translate(1117.20,171.50) scale(0.864,1)" font-size="11.5" fill="#444">Cells</text>
<path d="M1227.4,90.4 V87.6 H1215.8 L1222.4,94 L1215.8,100.4 H1227.6 V97.6" fill="none" stroke="#333" stroke-width="1.2" stroke-linejoin="miter"/>
<path d="M1237.8,92.5 L1240.6,95.8 L1243.4,92.5" stroke="#333" stroke-width="1.4" fill="none"/>
<rect x="1213.8" y="113.8" width="15.4" height="12.6" fill="#f0f0f0" stroke="#8f8f8f" stroke-width="1"/><path d="M1213.8,116.2 H1229.2" stroke="#8f8f8f" stroke-width="0.9"/>
<path d="M1221.5,117.8 V124 M1218.8,121.4 L1221.5,124.2 L1224.2,121.4" fill="none" stroke="#8f8f8f" stroke-width="0.9"/>
<path d="M1235.8,118.6 L1238.7,121.9 L1241.5,118.6" stroke="#b0b0b0" stroke-width="1.1" fill="none"/>
<path d="M1223.5,138.4 L1228.8,143.9 L1219.3,153.2 L1214,147.7 Z" fill="#f8f8f8" stroke="#b86fc8" stroke-width="1.4" stroke-linejoin="round"/>
<path d="M1217.9,144.2 L1222.9,149.4 L1219.3,153.2 L1214,147.7 Z" fill="#b86fc8" stroke="#b86fc8" stroke-width="1.2" stroke-linejoin="round"/>
<path d="M1217.2,148.4 L1218.6,149.8" stroke="#ead3ee" stroke-width="0.8"/>
<path d="M1235.8,144.7 L1238.7,147.8 L1241.5,144.7" stroke="#333" stroke-width="1.4" fill="none"/>
<text transform="translate(1258.50,99.60) scale(0.827,1)" font-size="15.6" fill="#c4c4c4">A</text>
<text transform="translate(1258.80,113.70) scale(0.860,1)" font-size="15.6" fill="#c4c4c4">Z</text>
<path d="M1270.6,94 H1286.2 L1280.4,100.6 V109.6 H1276.6 V100.6 Z" fill="#f6f6f6" stroke="#b4b4b4" stroke-width="1" stroke-linejoin="round"/>
<text transform="translate(1255.50,131.60) scale(1.011,1)" font-size="12" fill="#c0c0c0">Sort &amp;</text>
<text transform="translate(1254.60,147.30) scale(0.945,1)" font-size="12" fill="#c0c0c0">Filter</text>
<path d="M1283.6,141.0 L1286.4,144.0 L1289.2,141.0" stroke="#b0b0b0" stroke-width="1.1" fill="none"/>
<circle cx="1322.6" cy="97.2" r="10" fill="none" stroke="#333" stroke-width="1.1"/><path d="M1315.4,104.4 L1304.8,115" stroke="#333" stroke-width="1.2"/>
<text transform="translate(1302.10,131.60) scale(1.001,1)" font-size="12" fill="#222">Find &amp;</text>
<text transform="translate(1298.40,147.30) scale(0.911,1)" font-size="12" fill="#222">Select</text>
<path d="M1333.7,141.2 L1336.3,144.4 L1339.0,141.2" stroke="#222" stroke-width="1.4" fill="none"/>
<text transform="translate(1259.50,171.50) scale(0.949,1)" font-size="11.5" fill="#444">Editing</text>
<rect x="1366.6" y="85.5" width="30.8" height="30.8" fill="#f1f1f1" stroke="#a4a4a4" stroke-width="1.1"/><rect x="1367.2" y="86" width="29.6" height="3" fill="#dedede"/>
<path d="M1367,89.4 H1397 M1367,99 H1397 M1367,107 H1397 M1376.6,107 V116 M1387.1,107 V116" stroke="#c6c6c6" stroke-width="0.9" fill="none"/>
<circle cx="1381" cy="98.2" r="10" fill="#f7f7f7" stroke="#8f8f8f" stroke-width="1.3"/>
<rect x="1375.2" y="96.2" width="3" height="6.4" fill="#bdbdbd" stroke="#a8a8a8" stroke-width="0.5"/><rect x="1379.2" y="92.4" width="3" height="10.2" fill="#bdbdbd" stroke="#a8a8a8" stroke-width="0.5"/><rect x="1383.1" y="95" width="3.3" height="7.6" fill="#bdbdbd" stroke="#a8a8a8" stroke-width="0.5"/>
<path d="M1388.2,105.4 L1397.4,115.8" stroke="#8f8f8f" stroke-width="1.5"/>
<text transform="translate(1361.80,131.50) scale(0.944,1)" font-size="12" fill="#c0c0c0">Analyze</text>
<text transform="translate(1370.20,147.30) scale(0.931,1)" font-size="12" fill="#c0c0c0">Data</text>
<text transform="translate(1363.00,171.50) scale(0.871,1)" font-size="11.5" fill="#444">Analysis</text>
<rect x="1439.4" y="87.2" width="20.2" height="27.4" fill="#efefef" stroke="#c2c2c2" stroke-width="0.9"/>
<g transform="translate(1457.6,93.3) rotate(-45)"><rect x="-9.4" y="-5" width="7" height="10" fill="#efefef"/><rect x="-13.9" y="-8" width="4.8" height="16" rx="2.2" fill="#f6f6f6" stroke="#b8b8b8" stroke-width="1"/><rect x="-12.3" y="-6" width="1.6" height="12" rx="0.8" fill="none" stroke="#c2c2c2" stroke-width="0.7"/><rect x="-2.75" y="-7.8" width="5.5" height="15.6" fill="#d2d2d2" stroke="#bcbcbc" stroke-width="0.9"/><rect x="2.75" y="-3.4" width="6.2" height="6.8" fill="#f2f2f2" stroke="#c2c2c2" stroke-width="0.9"/></g>
<text transform="translate(1423.80,131.50) scale(0.965,1)" font-size="12" fill="#c0c0c0">Sensitivity</text>
<path d="M1446.3,140.8 L1449.3,144.4 L1452.3,140.8" stroke="#b0b0b0" stroke-width="1.1" fill="none"/>
<text transform="translate(1425.70,171.50) scale(0.911,1)" font-size="11.5" fill="#444">Sensitivity</text>
<path d="M1509.0,162.2 L1513.5,167.0 L1518.0,162.2" stroke="#444" stroke-width="1.2" fill="none"/>
<path d="M16.6,193.4 H25.3 M19.5,190.6 L16.6,193.4 L19.5,196.2" fill="none" stroke="#ababab" stroke-width="0.9"/>
<text transform="translate(26.90,195.80) scale(0.940,1)" font-size="9.6" fill="#ababab">0</text>
<circle cx="25.5" cy="195.4" r="0.45" fill="#ababab"/>
<text transform="translate(19.10,204.00) scale(0.923,1)" font-size="9.6" fill="#ababab">.00</text>
<text transform="translate(48.20,195.80) scale(0.923,1)" font-size="9.6" fill="#ababab">.00</text>
<path d="M45.1,200.4 H53.9 M51.0,197.6 L53.9,200.4 L51.0,203.2" fill="none" stroke="#ababab" stroke-width="0.9"/>
<text transform="translate(53.30,204.00) scale(0.900,1)" font-size="9.6" fill="#ababab">.0</text>
<path d="M77.8,193 H84.6" stroke="#333" stroke-width="1.2"/>
<path d="M78.2,195.6 L81.2,198.6 L84.2,195.6" stroke="#333" stroke-width="1.3" fill="none"/>
<text transform="translate(10.65,235.80) scale(1.045,1)" font-size="12.5" fill="#333">MODE</text>
<path d="M94.0,229.3 L98.9,234.4 L103.8,229.3" stroke="#444" stroke-width="1.1" fill="none"/>
<circle cx="118.5" cy="227.6" r="1.05" fill="#444"/><circle cx="118.5" cy="231.6" r="1.05" fill="#444"/><circle cx="118.5" cy="235.6" r="1.05" fill="#444"/>
<path d="M135.6,226.2 L147,237 M147,226.2 L135.6,237" stroke="#c9976f" stroke-width="1.1"/>
<path d="M157.8,231.6 L162.8,236.4 L173,225.8" fill="none" stroke="#2b7a4f" stroke-width="1.1"/>
<text transform="translate(182.60,236.40) scale(1.185,1)" font-size="15.5" fill="#333" font-style="italic" font-family='"Liberation Serif",sans-serif' stroke="#333" stroke-width="0.35">fx</text>
<text transform="translate(217.90,235.40) scale(0.999,1)" font-size="12.5" fill="#333">=AVERAGE(B2:B11)</text>
<path d="M1514.2,228.4 L1518.8,233.8 L1523.4,228.4" stroke="#444" stroke-width="1.1" fill="none"/>
<path d="M1522,260.4 L1526.6,254.8 L1531.2,260.4 Z" fill="#6e6e6e"/>
<rect x="1522.6" y="266.2" width="8.2" height="355.6" rx="4.1" fill="#6e6e6e"/>
<path d="M1522.4,780.2 L1526.6,786.6 L1530.8,780.2 Z" fill="#6e6e6e"/>
<path d="M19,797.8 V804.4 L14.8,801.1 Z" fill="#c4c4c4"/><path d="M35.2,797.8 V804.4 L39.4,801.1 Z" fill="#c4c4c4"/>
<text transform="translate(72.90,804.90) scale(0.967,1)" font-size="13" fill="#1e7145" font-weight="bold">Sheet1</text>
<circle cx="150.4" cy="801.3" r="8" fill="none" stroke="#666" stroke-width="1"/><path d="M146.4,801.3 H154.4 M150.4,797.3 V805.3" stroke="#444" stroke-width="1.2"/>
<circle cx="919.7" cy="796.9" r="0.9" fill="#9a9a9a"/><circle cx="919.7" cy="801" r="0.9" fill="#9a9a9a"/><circle cx="919.7" cy="805.1" r="0.9" fill="#9a9a9a"/>
<path d="M942.2,796.2 V805.2 L935.8,800.7 Z" fill="#6e6e6e"/>
<rect x="947.7" y="796.4" width="491" height="8.5" rx="4.2" fill="#6e6e6e"/>
<path d="M1506.6,796.2 V804.6 L1513.2,800.4 Z" fill="#6e6e6e"/>
</svg>
</body></html>
